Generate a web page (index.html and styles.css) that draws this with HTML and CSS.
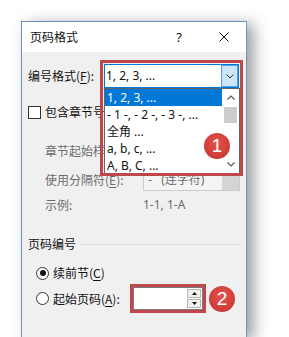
FILE: index.html
```html
<!DOCTYPE html>
<html lang="zh">
<head>
<meta charset="utf-8">
<link rel="stylesheet" href="styles.css">
</head>
<body>
<div class="dialog">
  <div class="titlebar">
    <span class="title">页码格式</span>
    <span class="help">?</span>
    <span class="close"><svg width="10" height="10" viewBox="0 0 10 10"><path d="M0.5 0.5L9.5 9.5M9.5 0.5L0.5 9.5" stroke="#111" stroke-width="1" fill="none"/></svg></span>
  </div>
  <div class="content">
    <div class="row row-format">
      <span class="lbl lbl-format">编号格式(<u>F</u>):</span>
      <div class="combo">
        <span class="combo-text">1, 2, 3, ...</span>
        <span class="combo-btn"><svg width="8" height="5" viewBox="0 0 8 5"><path d="M0.5 0.5L4 4L7.5 0.5" stroke="#333" stroke-width="1" fill="none"/></svg></span>
        <div class="droplist">
          <div class="items">
            <div class="item selected">1, 2, 3, ...</div>
            <div class="item">- 1 -, - 2 -, - 3 -, ...</div>
            <div class="item">全角 ...</div>
            <div class="item">a, b, c, ...</div>
            <div class="item">A, B, C, ...</div>
          </div>
          <div class="scrollbar">
            <span class="sb-btn"><svg width="8" height="5" viewBox="0 0 8 5"><path d="M0.5 4.5L4 1L7.5 4.5" stroke="#555" stroke-width="1.2" fill="none"/></svg></span>
            <span class="sb-track"><span class="sb-thumb"></span></span>
            <span class="sb-btn"><svg width="8" height="5" viewBox="0 0 8 5"><path d="M0.5 0.5L4 4L7.5 0.5" stroke="#555" stroke-width="1.2" fill="none"/></svg></span>
          </div>
        </div>
        <div class="hl hl-1"></div>
        <div class="badge badge-1">1</div>
      </div>
    </div>

    <div class="row row-check">
      <span class="checkbox"></span>
      <span class="lbl">包含章节号(<u>N</u>)</span>
    </div>

    <div class="row row-indent row-style">
      <span class="lbl dis">章节起始样式(<u>P</u>):</span>
    </div>

    <div class="row row-indent row-sep">
      <span class="lbl dis lbl-sub">使用分隔符(<u>E</u>):</span>
      <div class="combo-dis">
        <span class="dis-text">-&nbsp;&nbsp;&nbsp;(连字符)</span>
        <span class="dis-btn"></span>
      </div>
    </div>

    <div class="row row-indent row-example">
      <span class="lbl dis lbl-sub">示例:</span>
      <span class="dis">1-1, 1-A</span>
    </div>

    <div class="row row-section">
      <span class="section-title">页码编号</span>
      <span class="section-line"></span>
    </div>

    <div class="row row-radio row-radio1">
      <span class="radio checked"><span class="dot"></span></span>
      <span class="lbl">续前节(<u>C</u>)</span>
    </div>

    <div class="row row-radio row-radio2">
      <span class="radio"></span>
      <span class="lbl lbl-start">起始页码(<u>A</u>):</span>
      <div class="spin">
        <span class="spin-btns">
          <span class="spin-b"><svg width="5" height="3" viewBox="0 0 5 3"><path d="M0 3L2.5 0L5 3Z" fill="#111"/></svg></span>
          <span class="spin-b"><svg width="5" height="3" viewBox="0 0 5 3"><path d="M0 0L2.5 3L5 0Z" fill="#111"/></svg></span>
        </span>
        <div class="hl hl-2"></div>
        <div class="badge badge-2">2</div>
      </div>
    </div>
  </div>
</div>
</body>
</html>
```

FILE: styles.css
```css
* { box-sizing: border-box; }
html, body { margin: 0; padding: 0; background: #fff; }
body {
  width: 289px;
  height: 337px;
  overflow: hidden;
  font-family: "Noto Sans", "Noto Sans CJK SC", sans-serif;
  font-size: 12px;
  line-height: 16px;
  color: #111;
}
u { text-decoration: underline; text-underline-offset: 2px; }

.dialog {
  position: relative;
  margin: 21px 0 0 21px;
  width: 226px;
  height: 316px;
  border: 1px solid #6f93c0;
  border-bottom: 0;
  background: #f0f0f0;
  box-shadow: 7px 3px 14px rgba(0, 0, 0, 0.38);
}

.titlebar {
  height: 30px;
  background: #fff;
  display: flex;
  align-items: center;
  padding-left: 8px;
}
.title { flex: 1; font-family: "Noto Sans CJK SC", sans-serif; }
.help { width: 14px; text-align: center; font-size: 13px; }
.close { display: flex; margin-left: 33px; margin-right: 17px; }

.content { padding-left: 6px; }

.row { display: flex; align-items: center; }
.lbl { font-family: "Noto Sans CJK SC", sans-serif; white-space: nowrap; }
.dis { color: #6d6d6d; }

.row-format { margin-top: 12px; height: 24px; }
.lbl-format { width: 76px; }

.combo {
  position: relative;
  width: 135px;
  height: 24px;
  background: #fff;
  border: 1px solid #0078d7;
  display: flex;
  align-items: center;
  padding-left: 1px;
}
.combo-btn {
  position: absolute;
  right: 0;
  top: 0;
  bottom: 0;
  width: 17px;
  background: #cce4f7;
  border: 1px solid #569de5;
  display: flex;
  align-items: center;
  justify-content: center;
}

.droplist {
  position: absolute;
  z-index: 5;
  left: -1px;
  top: 23px;
  width: 136px;
  height: 86px;
  background: #fff;
  border: 1px solid #646464;
  display: flex;
}
.items { flex: 1; }
.item { height: 17px; line-height: 17px; padding-left: 2px; white-space: nowrap; }
.item.selected { background: #0078d7; color: #fff; }

.scrollbar {
  width: 17px;
  display: flex;
  flex-direction: column;
  background: #fff;
}
.sb-btn { height: 17px; display: flex; align-items: center; justify-content: center; }
.sb-track { flex: 1; padding: 1px 2px 0; }
.sb-thumb { display: block; height: 16px; background: #cdcdcd; }

.hl {
  position: absolute;
  z-index: 6;
  border: 3px solid #c0474b;
}
.hl-1 { left: -5px; top: -5px; width: 143px; height: 116px; }
.hl-2 { left: -4px; top: -4px; width: 76px; height: 29px; }

.badge {
  position: absolute;
  z-index: 7;
  width: 26px;
  height: 26px;
  border-radius: 50%;
  background: radial-gradient(circle at 50% 40%, #e2524d 0%, #d23f3b 60%, #b8302d 100%);
  color: #fff;
  font-family: "Liberation Sans", sans-serif;
  font-size: 19px;
  line-height: 26px;
  text-align: center;
}
.badge-1 { left: 99px; top: 68px; }
.badge-2 { left: 75px; top: -2px; }

.row-check { margin-top: 13px; height: 22px; }
.checkbox {
  width: 13px;
  height: 13px;
  border: 1px solid #333;
  background: #fff;
  margin-right: 4px;
}

.row-indent { padding-left: 17px; height: 22px; }
.row-style { margin-top: 17px; }
.row-sep { margin-top: 6px; height: 23px; }
.row-example { margin-top: 3px; }
.lbl-sub { width: 98px; }

.combo-dis {
  width: 97px;
  height: 23px;
  border: 1px solid #cccccc;
  background: #f4f4f4;
  display: flex;
  align-items: center;
  position: relative;
  padding-left: 4px;
}
.dis-text { color: #6d6d6d; font-family: "Noto Sans", "Noto Sans CJK SC", sans-serif; }
.dis-btn {
  position: absolute;
  right: 0;
  top: 0;
  bottom: 0;
  width: 17px;
  background: #d4d4d4;
}

.row-section { margin-top: 17px; height: 22px; }
.section-title { font-family: "Noto Sans CJK SC", sans-serif; }
.section-line { flex: 1; height: 1px; background: #dcdcdc; margin: 0 5px 0 5px; }

.row-radio { padding-left: 8px; }
.row-radio1 { margin-top: 7px; height: 22px; }
.row-radio2 { margin-top: 3px; height: 23px; }
.radio {
  width: 13px;
  height: 13px;
  border: 1px solid #333;
  border-radius: 50%;
  background: #fff;
  margin-right: 4px;
  display: flex;
  align-items: center;
  justify-content: center;
}
.dot { width: 6px; height: 6px; border-radius: 50%; background: #111; }
.lbl-start { width: 80px; }

.spin {
  position: relative;
  width: 70px;
  height: 23px;
  background: #fff;
  border: 1px solid #7a7a7a;
}
.spin-btns {
  position: absolute;
  right: 1px;
  top: 1px;
  bottom: 1px;
  width: 14px;
  display: flex;
  flex-direction: column;
  gap: 1px;
}
.spin-b {
  flex: 1;
  background: #f0f0f0;
  border: 1px solid #b5b5b5;
  display: flex;
  align-items: center;
  justify-content: center;
}
```
